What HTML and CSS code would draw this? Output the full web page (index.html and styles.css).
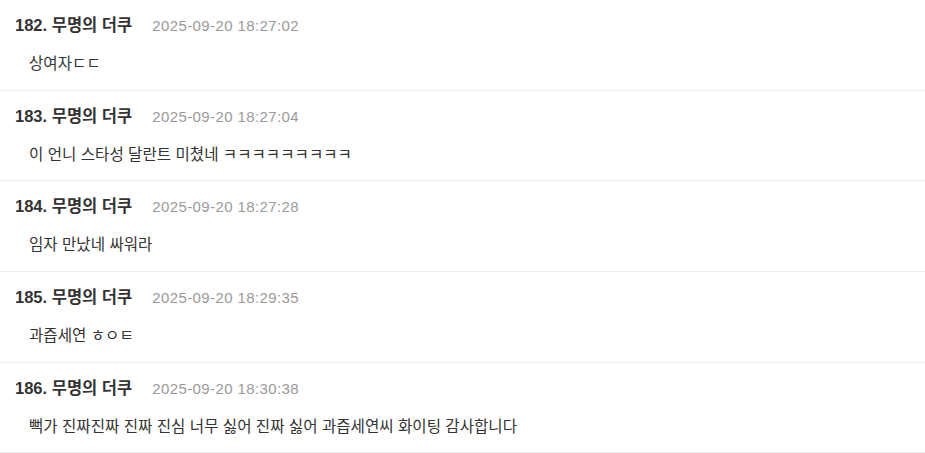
FILE: index.html
```html
<!DOCTYPE html>
<html lang="ko">
<head>
    <meta charset="UTF-8">
    <meta name="viewport" content="width=device-width, initial-scale=1.0">
    <title>댓글</title>
    <link rel="stylesheet" href="styles.css">
</head>
<body>
    <ul class="comment-list">
        <li class="comment">
            <div class="comment-head">
                <span class="comment-name">182. 무명의 더쿠</span>
                <span class="comment-date">2025-09-20 18:27:02</span>
            </div>
            <p class="comment-text">상여자ㄷㄷ</p>
        </li>
        <li class="comment">
            <div class="comment-head">
                <span class="comment-name">183. 무명의 더쿠</span>
                <span class="comment-date">2025-09-20 18:27:04</span>
            </div>
            <p class="comment-text">이 언니 스타성 달란트 미쳤네 ㅋㅋㅋㅋㅋㅋㅋㅋㅋ</p>
        </li>
        <li class="comment">
            <div class="comment-head">
                <span class="comment-name">184. 무명의 더쿠</span>
                <span class="comment-date">2025-09-20 18:27:28</span>
            </div>
            <p class="comment-text">임자 만났네 싸워라</p>
        </li>
        <li class="comment">
            <div class="comment-head">
                <span class="comment-name">185. 무명의 더쿠</span>
                <span class="comment-date">2025-09-20 18:29:35</span>
            </div>
            <p class="comment-text">과즙세연 ㅎㅇㅌ</p>
        </li>
        <li class="comment">
            <div class="comment-head">
                <span class="comment-name">186. 무명의 더쿠</span>
                <span class="comment-date">2025-09-20 18:30:38</span>
            </div>
            <p class="comment-text">뻑가 진짜진짜 진짜 진심 너무 싫어 진짜 싫어 과즙세연씨 화이팅 감사합니다</p>
        </li>
    </ul>
</body>
</html>
```

FILE: styles.css
```css
* {
    margin: 0;
    padding: 0;
    box-sizing: border-box;
}

body {
    background: #fff;
    font-family: 'Liberation Sans', 'Noto Sans CJK KR', sans-serif;
    color: #333;
}

.comment-list {
    list-style: none;
}

.comment {
    padding: 13px 15px 13.7px;
    border-bottom: 1px solid #ececec;
}

.comment-head {
    display: flex;
    align-items: baseline;
    gap: 20px;
    line-height: 24px;
    margin-bottom: 14px;
}

.comment-name {
    font-size: 16.5px;
    font-weight: bold;
    color: #333;
}

.comment-date {
    font-size: 15px;
    letter-spacing: 0.4px;
    color: #9a9a9a;
}

.comment-text {
    padding-left: 14px;
    font-size: 15.6px;
    line-height: 24px;
    color: #333;
}
```
